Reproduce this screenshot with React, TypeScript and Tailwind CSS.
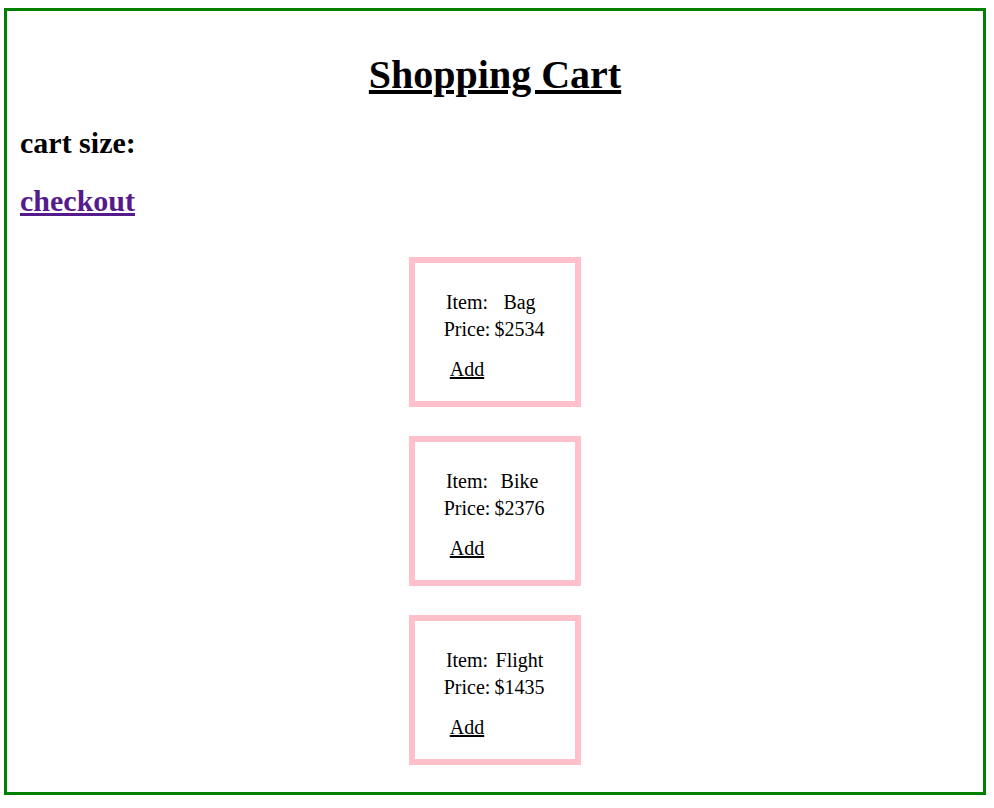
const items = [
  { name: "Bag", price: 2534 },
  { name: "Bike", price: 2376 },
  { name: "Flight", price: 1435 },
];

function ItemCard({ name, price }: { name: string; price: number }) {
  return (
    <div className="flex h-[150px] w-[172px] justify-center border-[6px] border-[#ffc0cb] pr-[2px] pt-[28px]">
      <div className="grid h-fit grid-cols-[49px_52px] gap-x-[2px] gap-y-[4px] text-center text-[20px] leading-[23px]">
        <span>Item:</span>
        <span>{name}</span>
        <span>Price:</span>
        <span>${price}</span>
        <span className="mt-[13px] underline">Add</span>
      </div>
    </div>
  );
}

export default function App() {
  return (
    <div
      className="ml-[4px] mt-[8px] h-[787px] w-[982px] border-[3px] border-[#008000] bg-white px-[13px] pt-[41px] text-black"
      style={{ fontFamily: '"Liberation Serif", "Times New Roman", serif' }}
    >
      {/* Header */}
      <h1 className="text-center text-[40px] font-bold leading-[46px] underline">
        Shopping Cart
      </h1>
      <h2 className="mt-[28px] text-[30px] font-bold leading-[34px]">
        cart size:
      </h2>
      <h2 className="mt-[24px] text-[30px] font-bold leading-[34px]">
        <a href="#" className="text-[#551a8b] underline">
          checkout
        </a>
      </h2>

      {/* Items */}
      <div className="mt-[39px] flex flex-col items-center gap-[29px]">
        {items.map((item) => (
          <ItemCard key={item.name} name={item.name} price={item.price} />
        ))}
      </div>
    </div>
  );
}
